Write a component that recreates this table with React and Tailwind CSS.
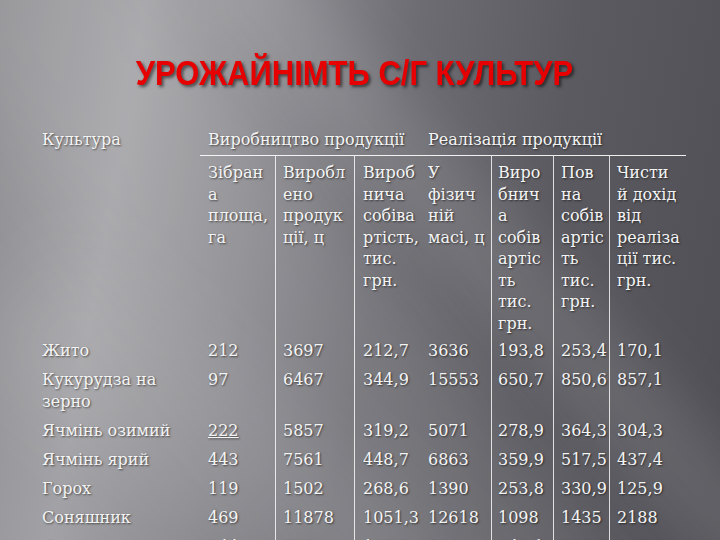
import React from 'react';

const subHeads = [
  ['Зібран', 'а', 'площа,', 'га'],
  ['Виробл', 'ено', 'продук', 'ції, ц'],
  ['Вироб', 'нича', 'собіва', 'ртість,', 'тис.', 'грн.'],
  ['У', 'фізич', 'ній', 'масі, ц'],
  ['Виро', 'бнич', 'а', 'собів', 'артіс', 'ть', 'тис.', 'грн.'],
  ['Пов', 'на', 'собів', 'артіс', 'ть', 'тис.', 'грн.'],
  ['Чисти', 'й дохід', 'від', 'реаліза', 'ції тис.', 'грн.'],
];

const rows = [
  [['Жито'], '212', '3697', '212,7', '3636', '193,8', '253,4', '170,1'],
  [['Кукурудза на', 'зерно'], '97', '6467', '344,9', '15553', '650,7', '850,6', '857,1'],
  [['Ячмінь озимий'], '222', '5857', '319,2', '5071', '278,9', '364,3', '304,3'],
  [['Ячмінь ярий'], '443', '7561', '448,7', '6863', '359,9', '517,5', '437,4'],
  [['Горох'], '119', '1502', '268,6', '1390', '253,8', '330,9', '125,9'],
  [['Соняшник'], '469', '11878', '1051,3', '12618', '1098', '1435', '2188'],
  [['Соя'], '244', '752', '183,5', '598', '246,1', '306,7', '265,8'],
];

// cell classes per sub column: left padding and the white rule on the left
const colCls = [
  'pl-[8px]',
  'pl-[7px] border-l border-white/80',
  'pl-[8px] border-l border-white/80',
  'pl-[8px]',
  'pl-[6px] border-l border-white/80',
  'pl-[7px] border-l border-white/80',
  'pl-[7px] border-l border-white/80',
];

export default function App() {
  return (
    <div className="relative w-full h-[540px] overflow-hidden bg-[linear-gradient(100deg,#8e8e92_0%,#a2a2a6_18%,#8a8a8f_34%,#6c6c72_52%,#5a5a60_72%,#4e4e54_100%)] font-['DejaVu_Serif',serif] text-[#f4f4f4] text-[16px] [text-shadow:1px_1px_2px_rgba(0,0,0,0.55)]">
      {/* light shafts */}
      <div className="absolute -left-[120px] top-[-60px] w-[220px] h-[900px] rotate-[-38deg] origin-top bg-white/10 blur-2xl"></div>
      <div className="absolute left-[180px] top-[-40px] w-[90px] h-[900px] rotate-[-42deg] origin-top bg-white/10 blur-xl"></div>
      <div className="absolute left-[-40px] top-[300px] w-[140px] h-[500px] rotate-[-50deg] origin-top bg-white/10 blur-2xl"></div>

      <div className="relative">
        <div className="pt-[56px] pr-[11px] text-center">
          <h1 className="inline-block scale-y-[1.12] font-['Liberation_Sans',Arial,sans-serif] font-bold text-[31px] leading-[36px] text-[#e60000] [text-shadow:2px_2px_3px_rgba(0,0,0,0.55)]">
            УРОЖАЙНІМТЬ С/Г КУЛЬТУР
          </h1>
        </div>

        <div className="mt-[33px] pl-[42px] grid grid-cols-[158px_75px_79px_66px_71px_62px_56px_77px]">
          <div className="pt-[4px] pb-[4px] leading-[22px]">Культура</div>
          <div className="col-span-3 pl-[8px] pt-[4px] pb-[4px] leading-[22px] whitespace-nowrap">Виробництво продукції</div>
          <div className="col-span-4 pl-[8px] pt-[4px] pb-[4px] leading-[22px] whitespace-nowrap">Реалізація продукції</div>

          <div></div>
          {subHeads.map((lines, i) => (
            <div key={i} className={`${colCls[i]} border-t border-t-white/90 pt-[6px] pb-[3px] leading-[21.5px] whitespace-nowrap`}>
              {lines.map((l, j) => (
                <div key={j}>{l}</div>
              ))}
            </div>
          ))}

          {rows.map((r, ri) => (
            <React.Fragment key={ri}>
              <div className="pt-[3px] pb-[4px] leading-[22px] whitespace-nowrap">
                {r[0].map((l, j) => (
                  <div key={j}>{l}</div>
                ))}
              </div>
              {r.slice(1).map((v, ci) => (
                <div key={ci} className={`${colCls[ci]} pt-[3px] pb-[4px] leading-[22px] whitespace-nowrap`}>
                  <span className={ri === 2 && ci === 0 ? 'underline' : ''}>{v}</span>
                </div>
              ))}
            </React.Fragment>
          ))}
        </div>
      </div>
    </div>
  );
}
